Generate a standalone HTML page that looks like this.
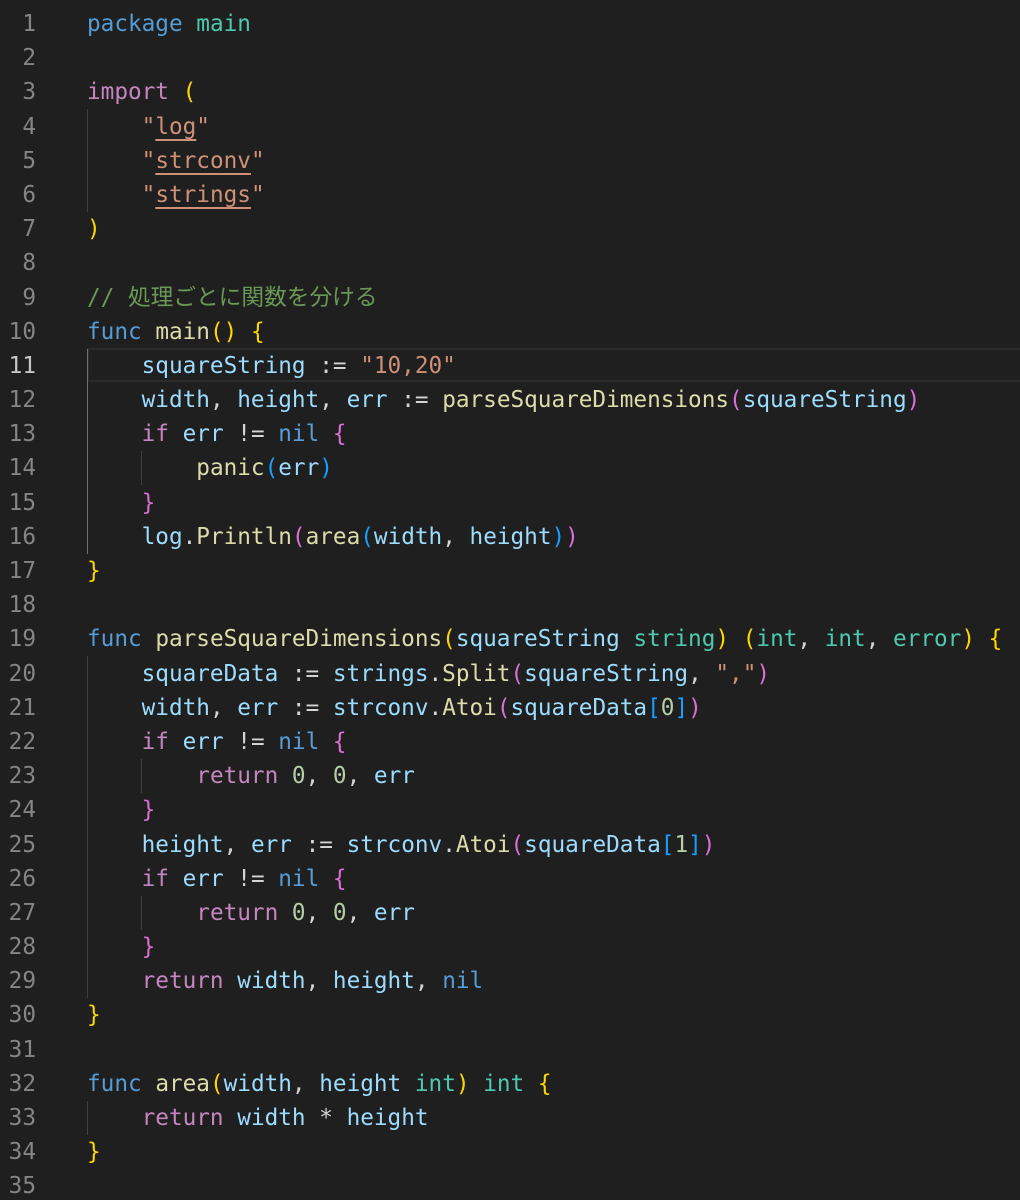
<!DOCTYPE html>
<html><head><meta charset="utf-8"><style>
html,body{margin:0;padding:0;background:#1f1f1f;width:1020px;height:1200px;overflow:hidden}
#ed{position:relative;width:1020px;height:1200px;font-family:"DejaVu Sans Mono","Liberation Mono","Noto Sans CJK JP",monospace;font-size:22.7px;}
#nums{position:absolute;left:0;top:7px;width:36px;text-align:right;color:#858585;line-height:34.2px}
#code{position:absolute;left:87px;top:7px;white-space:pre;color:#d4d4d4;line-height:34.2px}
#nums div,#code div{height:34.2px}
.g{position:absolute;width:1px;background:#404040}
.k{color:#569cd6}.p{color:#c586c0}.f{color:#dcdcaa}.v{color:#9cdcfe}.s{color:#ce9178}.n{color:#b5cea8}.t{color:#4ec9b0}.cm{color:#6a9955}
.y{color:#ffd700}.m{color:#da70d6}.b{color:#179fff}.u{text-decoration:underline;text-underline-offset:5px}
</style></head><body><div id="ed">
<div style="position:absolute;left:87px;top:348px;width:940px;height:30px;border:2px solid #2c2c2c;border-right:none"></div>
<div class="g" style="left:87px;top:109px;height:103px"></div>
<div class="g" style="left:87px;top:349px;height:205px;background:#6e6e6e"></div>
<div class="g" style="left:141px;top:451px;height:34px"></div>
<div class="g" style="left:87px;top:656px;height:342px"></div>
<div class="g" style="left:141px;top:759px;height:34px"></div>
<div class="g" style="left:141px;top:896px;height:34px"></div>
<div class="g" style="left:87px;top:1101px;height:34px"></div>
<div id="nums"><div>1</div><div>2</div><div>3</div><div>4</div><div>5</div><div>6</div><div>7</div><div>8</div><div>9</div><div>10</div><div style="color:#c6c6c6">11</div><div>12</div><div>13</div><div>14</div><div>15</div><div>16</div><div>17</div><div>18</div><div>19</div><div>20</div><div>21</div><div>22</div><div>23</div><div>24</div><div>25</div><div>26</div><div>27</div><div>28</div><div>29</div><div>30</div><div>31</div><div>32</div><div>33</div><div>34</div><div>35</div></div>
<div id="code"><div><span class="k">package</span> <span class="t">main</span></div><div> </div><div><span class="p">import</span> <span class="y">(</span></div><div>    <span class="s">"<span class="u">log</span>"</span></div><div>    <span class="s">"<span class="u">strconv</span>"</span></div><div>    <span class="s">"<span class="u">strings</span>"</span></div><div><span class="y">)</span></div><div> </div><div><span class="cm">// 処理ごとに関数を分ける</span></div><div><span class="k">func</span> <span class="f">main</span><span class="y">()</span> <span class="y">{</span></div><div>    <span class="v">squareString</span> := <span class="s">"10,20"</span></div><div>    <span class="v">width</span>, <span class="v">height</span>, <span class="v">err</span> := <span class="f">parseSquareDimensions</span><span class="m">(</span><span class="v">squareString</span><span class="m">)</span></div><div>    <span class="p">if</span> <span class="v">err</span> != <span class="k">nil</span> <span class="m">{</span></div><div>        <span class="f">panic</span><span class="b">(</span><span class="v">err</span><span class="b">)</span></div><div>    <span class="m">}</span></div><div>    <span class="v">log</span>.<span class="f">Println</span><span class="m">(</span><span class="f">area</span><span class="b">(</span><span class="v">width</span>, <span class="v">height</span><span class="b">)</span><span class="m">)</span></div><div><span class="y">}</span></div><div> </div><div><span class="k">func</span> <span class="f">parseSquareDimensions</span><span class="y">(</span><span class="v">squareString</span> <span class="t">string</span><span class="y">)</span> <span class="y">(</span><span class="t">int</span>, <span class="t">int</span>, <span class="t">error</span><span class="y">)</span> <span class="y">{</span></div><div>    <span class="v">squareData</span> := <span class="v">strings</span>.<span class="f">Split</span><span class="m">(</span><span class="v">squareString</span>, <span class="s">","</span><span class="m">)</span></div><div>    <span class="v">width</span>, <span class="v">err</span> := <span class="v">strconv</span>.<span class="f">Atoi</span><span class="m">(</span><span class="v">squareData</span><span class="b">[</span><span class="n">0</span><span class="b">]</span><span class="m">)</span></div><div>    <span class="p">if</span> <span class="v">err</span> != <span class="k">nil</span> <span class="m">{</span></div><div>        <span class="p">return</span> <span class="n">0</span>, <span class="n">0</span>, <span class="v">err</span></div><div>    <span class="m">}</span></div><div>    <span class="v">height</span>, <span class="v">err</span> := <span class="v">strconv</span>.<span class="f">Atoi</span><span class="m">(</span><span class="v">squareData</span><span class="b">[</span><span class="n">1</span><span class="b">]</span><span class="m">)</span></div><div>    <span class="p">if</span> <span class="v">err</span> != <span class="k">nil</span> <span class="m">{</span></div><div>        <span class="p">return</span> <span class="n">0</span>, <span class="n">0</span>, <span class="v">err</span></div><div>    <span class="m">}</span></div><div>    <span class="p">return</span> <span class="v">width</span>, <span class="v">height</span>, <span class="k">nil</span></div><div><span class="y">}</span></div><div> </div><div><span class="k">func</span> <span class="f">area</span><span class="y">(</span><span class="v">width</span>, <span class="v">height</span> <span class="t">int</span><span class="y">)</span> <span class="t">int</span> <span class="y">{</span></div><div>    <span class="p">return</span> <span class="v">width</span> * <span class="v">height</span></div><div><span class="y">}</span></div><div> </div></div>
</div></body></html>
